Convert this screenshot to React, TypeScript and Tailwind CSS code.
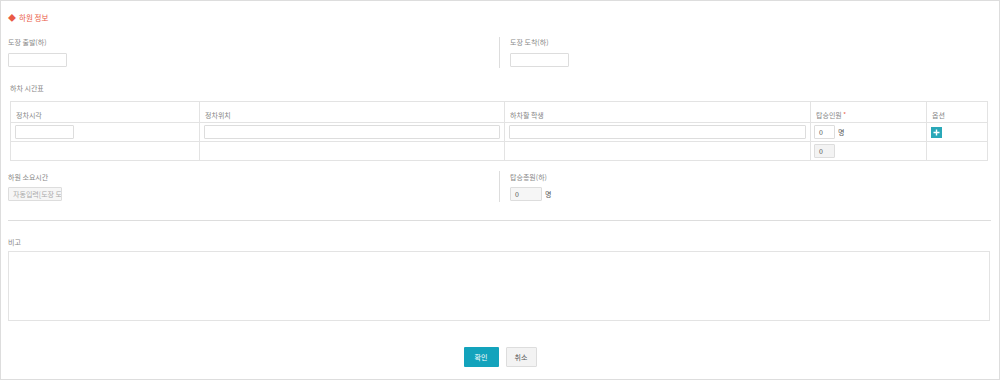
import React from "react";

const FONT = { fontFamily: '"Noto Sans CJK KR", "Noto Sans", sans-serif' };

function Label({ children, className = "" }: { children: React.ReactNode; className?: string }) {
  return <div className={`h-[10px] text-[7px] leading-[10px] text-[#888] ${className}`}>{children}</div>;
}

function Box({ className = "", children }: { className?: string; children?: React.ReactNode }) {
  return (
    <div className={`h-[14px] border border-[#ddd] rounded-[1px] text-[7px] leading-[12px] px-[4px] ${className}`}>
      {children}
    </div>
  );
}

export default function App() {
  return (
    <div style={FONT} className="w-[1000px] h-[380px] bg-white border border-[#ddd] px-[7px] pt-[12px] text-[#555]">
      {/* section title */}
      <div className="flex items-center gap-[3px] h-[10px] text-[7.5px] leading-[10px] text-[#ea5a45]">
        <span className="text-[8px]">◆</span>
        <span>하원 정보</span>
      </div>

      {/* start / arrival */}
      <div className="flex mt-[14px] h-[31px]">
        <div className="w-[491px]">
          <Label>도장 출발(하)</Label>
          <Box className="w-[59px] mt-[6px]" />
        </div>
        <div className="flex-1 border-l border-[#ddd] pl-[10px]">
          <Label>도장 도착(하)</Label>
          <Box className="w-[59px] mt-[6px]" />
        </div>
      </div>

      {/* timetable */}
      <Label className="mt-[15px] ml-[2px]">하차 시간표</Label>
      <div className="ml-[2px] mt-[8px] w-[978px] border border-[#e3e3e3] text-[7px] text-[#888]">
        <div className="flex h-[21px] border-b border-[#e3e3e3]">
          <div className="w-[189px] pl-[5px] pt-[8px] leading-[10px] border-r border-[#e3e3e3]">정차시각</div>
          <div className="w-[305px] pl-[5px] pt-[8px] leading-[10px] border-r border-[#e3e3e3]">정차위치</div>
          <div className="w-[306px] pl-[5px] pt-[8px] leading-[10px] border-r border-[#e3e3e3]">하차할 학생</div>
          <div className="w-[116px] pl-[5px] pt-[8px] leading-[10px] border-r border-[#e3e3e3]">
            탑승인원 <span className="text-[#ea5a45] align-top text-[6px]">*</span>
          </div>
          <div className="flex-1 pl-[5px] pt-[8px] leading-[10px]">옵션</div>
        </div>
        <div className="flex h-[19px] border-b border-[#e3e3e3] items-center">
          <div className="w-[189px] h-full flex items-center pl-[4px] border-r border-[#e3e3e3]">
            <Box className="w-[59px] border-[#ccc]" />
          </div>
          <div className="w-[305px] h-full flex items-center px-[4px] border-r border-[#e3e3e3]">
            <Box className="w-full" />
          </div>
          <div className="w-[306px] h-full flex items-center px-[4px] border-r border-[#e3e3e3]">
            <Box className="w-full" />
          </div>
          <div className="w-[116px] h-full flex items-center gap-[3px] pl-[3px] border-r border-[#e3e3e3]">
            <Box className="w-[21px] text-[#555] px-[3px]">0</Box>
            <span className="text-[#555] text-[7px]">명</span>
          </div>
          <div className="flex-1 h-full flex items-center pl-[4px]">
            <div className="w-[11px] h-[11px] bg-[#2aa8b8] flex items-center justify-center">
              <svg width="7" height="7" viewBox="0 0 7 7">
                <path d="M3.5 0.5v6M0.5 3.5h6" stroke="#fff" strokeWidth="1.4" />
              </svg>
            </div>
          </div>
        </div>
        <div className="flex h-[18px] items-center">
          <div className="w-[189px] h-full border-r border-[#e3e3e3]" />
          <div className="w-[305px] h-full border-r border-[#e3e3e3]" />
          <div className="w-[306px] h-full border-r border-[#e3e3e3]" />
          <div className="w-[116px] h-full flex items-center pl-[3px] border-r border-[#e3e3e3]">
            <Box className="w-[21px] bg-[#f3f3f3] text-[#555] px-[3px]">0</Box>
          </div>
          <div className="flex-1 h-full" />
        </div>
      </div>

      {/* duration / total */}
      <div className="flex mt-[10px] h-[31px]">
        <div className="w-[491px] pt-[1px]">
          <Label>하원 소요시간</Label>
          <Box className="w-[54px] mt-[5px] bg-[#f6f6f6] text-[#aaa] px-[2px] overflow-hidden whitespace-nowrap">
            자동입력[도장 도
          </Box>
        </div>
        <div className="flex-1 border-l border-[#ddd] pl-[10px] pt-[1px]">
          <Label>탑승총원(하)</Label>
          <div className="flex items-center gap-[3px] mt-[5px]">
            <Box className="w-[32px] bg-[#f6f6f6] text-[#555] px-[3px]">0</Box>
            <span className="text-[7px] text-[#555]">명</span>
          </div>
        </div>
      </div>

      <div className="mt-[18px] w-[983px] border-t border-[#ddd]" />

      {/* remarks */}
      <Label className="mt-[16px]">비고</Label>
      <div className="mt-[4px] w-[982px] h-[70px] border border-[#e3e3e3]" />

      {/* actions */}
      <div className="flex justify-center gap-[7px] mt-[26px]">
        <button className="w-[35px] h-[20px] bg-[#13a3bc] text-white text-[7px] rounded-[1px]">확인</button>
        <button className="w-[31px] h-[20px] bg-[#f3f3f3] border border-[#ddd] text-[#555] text-[7px] rounded-[1px]">
          취소
        </button>
      </div>
    </div>
  );
}
